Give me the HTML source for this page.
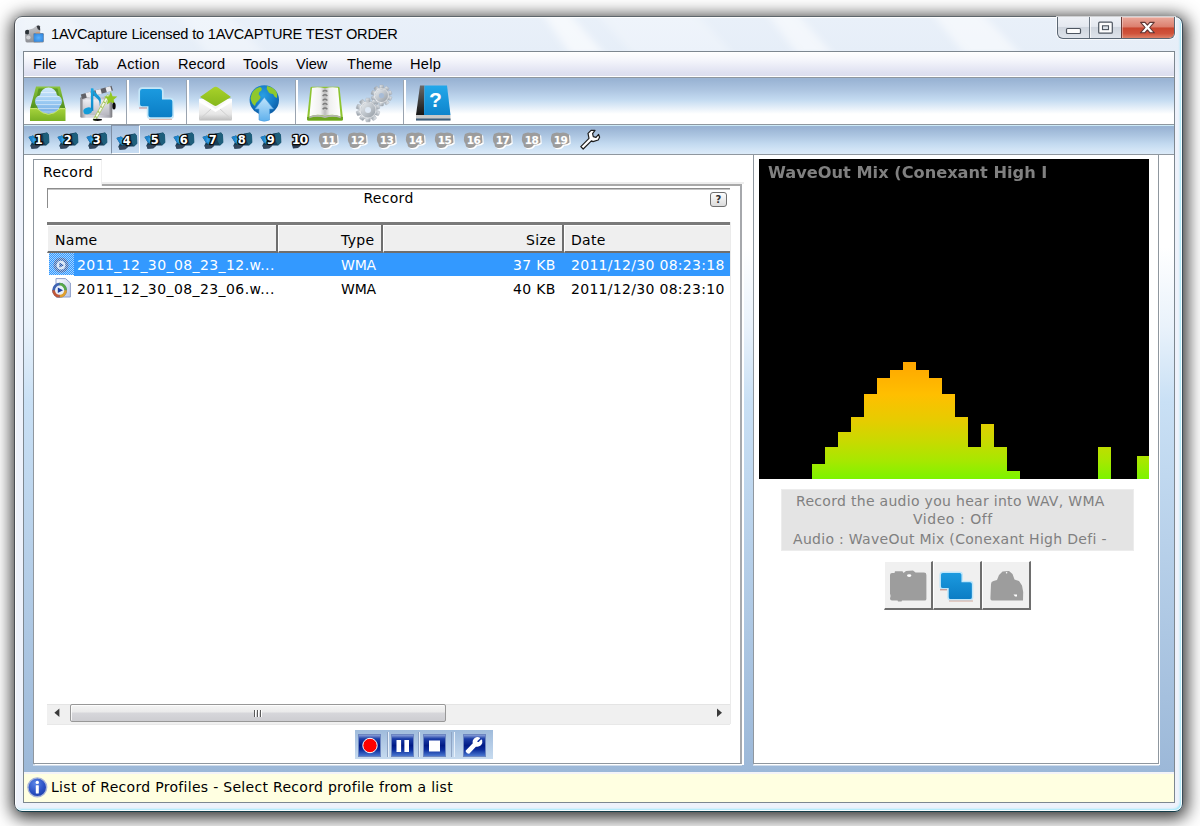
<!DOCTYPE html>
<html><head><meta charset="utf-8"><title>1AVCapture</title>
<style>
html,body{margin:0;padding:0;}
body{width:1200px;height:826px;background:#fff;position:relative;overflow:hidden;font-family:"DejaVu Sans","Liberation Sans",sans-serif;font-size:14px;letter-spacing:0.3px;color:#000;}
div,span{box-sizing:border-box;}
.a{position:absolute;}
svg{position:absolute;overflow:visible;}
#win{position:absolute;left:14px;top:16px;width:1169px;height:796px;border:1px solid #3f5868;border-color:#5e666c #3a4c5a #163e4a #4a4e54;border-radius:8px;
 background:linear-gradient(180deg,#e9f0f9 0px,#e6eef8 34px,#eef2fb 60px,#eef2fb 100%);
 box-shadow:1px 3px 17px 3px rgba(0,0,0,.82), inset 0 0 0 1px rgba(255,255,255,.9), inset -2px -2px 2px 0 rgba(120,228,250,.65);}
#title{position:absolute;left:51px;top:25px;letter-spacing:-0.19px;font-family:"Liberation Sans",sans-serif;font-size:14.6px;line-height:18px;white-space:nowrap;color:#000;}
#client{position:absolute;left:23px;top:51px;width:1152px;height:752px;border:1px solid #7d8790;background:#fff;}
#menubar{position:absolute;left:24px;top:52px;width:1150px;height:24px;background:linear-gradient(180deg,#ffffff 0%,#f4f5fb 35%,#dfe1f1 85%,#dcdeee 100%);}
.mi{position:absolute;top:55px;letter-spacing:0;font-family:"Liberation Sans",sans-serif;font-size:14.6px;line-height:18px;white-space:nowrap;}
#tb1{position:absolute;left:24px;top:76px;width:1150px;height:49px;border-top:1px solid #fff;border-bottom:1px solid #8f979f;
 background:linear-gradient(180deg,#9ab4d4 0px,#9ab4d4 3px,#adc5e1 13px,#c4dbf1 23px,#ffffff 37px,#ffffff 100%);}
#tb1:before{content:"";position:absolute;left:0;top:0;width:100%;height:1px;background:#8f979f;}
#tb2{position:absolute;left:24px;top:125px;width:1150px;height:30px;border-bottom:1px solid #8f979f;
 background:linear-gradient(180deg,#cdeaf6 0px,#cdeaf6 1px,#9ab4d4 1px,#9ab4d4 3px,#abc4e0 10px,#c3daf0 19px,#d3e5f6 25px,#dcebf8 29px);}
#main{position:absolute;left:24px;top:155px;width:1150px;height:617px;background:linear-gradient(180deg,#ffffff 0%,#ffffff 15%,#e9f2fb 28%,#c9e0f5 40%,#9cb8d8 100%);}
.sep{position:absolute;top:80px;width:1px;height:44px;background:#9aa4b0;box-shadow:1px 0 0 #fff,2px 0 0 #fff;}
/* left pane */
#pane{position:absolute;left:33px;top:184px;width:709px;height:580px;background:#fff;border:1px solid #8f979f;border-top:2px solid #a8a8a8;border-right:2px solid #a6a8ac;box-shadow:2px 1px 0 #fff,0 2px 0 rgba(255,255,255,.5);}
#tabhead{position:absolute;left:33px;top:159px;width:69px;height:27px;background:#fff;border:1px solid #8f979f;border-bottom:none;border-right:1px solid #f0f0f0;}
#tabfill{position:absolute;left:102px;top:155px;width:642px;height:29px;background:#fff;border-bottom:2px solid #eeeeee;}
#tabtxt{position:absolute;left:43px;top:164px;line-height:17px;white-space:nowrap;}
#tbox{position:absolute;left:47px;top:188px;width:683px;height:20px;border-top:1px solid #8c8c8c;border-left:1px solid #8c8c8c;box-shadow:inset 0 1px 0 #c4c4c4;}
#tboxtxt{position:absolute;left:47px;top:190px;width:683px;text-align:center;line-height:17px;}
#qbtn{position:absolute;left:710px;top:192px;width:17px;height:15px;border:1px solid #6f6f6f;border-radius:3px;background:linear-gradient(180deg,#fdfdfd,#dcdcdc);font-size:10px;font-weight:bold;line-height:13px;text-align:center;color:#333;}
#lright{position:absolute;left:730px;top:222px;width:1px;height:502px;background:#ebebeb;}
#lhtop{position:absolute;left:47px;top:222px;width:683px;height:3px;background:#7a7a7a;}
.hc{position:absolute;top:225px;height:28px;background:#efefef;box-shadow:inset 0 1px 0 #fff;border-right:2px solid #6e6e6e;border-bottom:2px solid #6e6e6e;border-left:1px solid #fff;}
.ht{position:absolute;top:232px;line-height:17px;white-space:nowrap;}
.row{position:absolute;left:74px;width:656px;height:23px;}
.sel{background:#3399ff;}
.ct{position:absolute;line-height:17px;white-space:nowrap;}
.w{color:#fff;}
#hsb{position:absolute;left:47px;top:704px;width:683px;height:21px;background:#f0f0f0;border-top:1px solid #e4e4e4;border-bottom:1px solid #e8e8e8;}
#thumb{position:absolute;left:70px;top:704px;width:376px;height:18px;border:1px solid #989898;border-radius:2px;background:linear-gradient(180deg,#f5f5f5 0%,#ebebeb 42%,#d6d6da 52%,#cdcdd1 100%);box-shadow:inset 1px 1px 0 rgba(255,255,255,.8);}
#stb{position:absolute;left:355px;top:730px;width:138px;height:29px;background:linear-gradient(180deg,#9fbbdb 0%,#b3cbe6 50%,#c7dbef 100%);}
.sb{position:absolute;top:734px;width:23px;height:23px;background:linear-gradient(180deg,#8aa0d8 0%,#1c3ea8 18%,#001a86 50%,#0a2c9c 70%,#4a78d0 100%);border:1px solid #6d86c0;}
/* right pane */
#rpane{position:absolute;left:753px;top:155px;width:406px;height:609px;background:#fff;border:1px solid #8f979f;border-top:none;box-shadow:1px 1px 0 #fff,0 2px 0 rgba(255,255,255,.5);}
#video{position:absolute;left:759px;top:159px;width:390px;height:320px;background:#000;overflow:hidden;}
#vtxt{position:absolute;left:768px;top:165px;font-weight:bold;color:#808080;line-height:17px;white-space:nowrap;font-size:15px;letter-spacing:0;transform-origin:0 0;transform:scaleX(1.08);}
#info{position:absolute;left:781px;top:489px;width:353px;height:62px;background:#e4e4e4;border:1px solid #ececec;}
.it{position:absolute;color:#808080;line-height:17px;white-space:nowrap;}
.bb{position:absolute;top:561px;width:49px;height:49px;background:#f0f0f0;border-top:1px solid #fff;border-left:1px solid #fff;border-right:2px solid #6e6e6e;border-bottom:2px solid #6e6e6e;}
#status{position:absolute;left:24px;top:772px;width:1150px;height:30px;background:#ffffe1;border-top:2px solid #f4f4f8;}
#sttxt{position:absolute;left:51px;top:779px;line-height:17px;white-space:nowrap;}

</style></head>
<body>
<div id="win"></div>
<svg style="left:15px;top:17px;overflow:hidden" width="1167" height="34" viewBox="15 17 1167 34">
 <defs><filter id="blr" x="-20%" y="-50%" width="140%" height="200%"><feGaussianBlur stdDeviation="5 1"/></filter></defs>
 <g fill="#ffffff" filter="url(#blr)">
  <path d="M15 17 H70 L100 51 H15Z" opacity=".3"/>
  <path d="M180 17 H230 L262 51 H205Z" opacity=".3"/>
  <path d="M545 17 H572 L602 51 H568Z" opacity=".6"/>
  <path d="M600 17 H700 L730 51 H630Z" opacity=".25"/>
  <path d="M770 17 H800 L830 51 H795Z" opacity=".5"/>
  <path d="M935 17 H985 L1018 51 H962Z" opacity=".5"/>
 </g>
</svg>
<div id="title">1AVCapture Licensed to 1AVCAPTURE TEST ORDER</div>
<div id="client"></div>
<div id="menubar"></div>
<div class="mi" style="left:33px">File</div>
<div class="mi" style="left:75px">Tab</div>
<div class="mi" style="left:117px;letter-spacing:.4px">Action</div>
<div class="mi" style="left:178px">Record</div>
<div class="mi" style="left:243px;letter-spacing:.25px">Tools</div>
<div class="mi" style="left:296px">View</div>
<div class="mi" style="left:347px">Theme</div>
<div class="mi" style="left:410px;letter-spacing:.3px">Help</div>
<div id="tb1"></div>
<div id="tb2"></div>
<div id="main"></div>
<!-- title icon -->
<svg style="left:24px;top:24px" width="22" height="20" viewBox="0 0 22 20">
 <defs><linearGradient id="ti1" x1="0" y1="0" x2="0" y2="1"><stop offset="0" stop-color="#c4c6ca"/><stop offset="0.5" stop-color="#a9abb0"/><stop offset="1" stop-color="#8d8f94"/></linearGradient>
 <radialGradient id="ti2" cx="0.5" cy="0.5" r="0.7"><stop offset="0" stop-color="#58b0ff"/><stop offset="1" stop-color="#2a7fd6"/></radialGradient>
 <filter id="tib" x="-10%" y="-10%" width="120%" height="120%"><feGaussianBlur stdDeviation=".45"/></filter></defs>
 <g filter="url(#tib)">
 <path d="M1 9 Q1 6.4 3.6 6 L9 4.6 L13 1.4 Q15.4 0.6 16 2.6 L16.2 8 L16.2 18.2 L3 18.6 Q1.4 18.6 1.4 16.6 Z" fill="url(#ti1)"/>
 <path d="M12.6 2 Q15 0.6 16 2.6 L16.2 6.4 L13.8 5.2 Z" fill="#34383e"/>
 <path d="M1.2 6.8 Q3.6 5 5 6.6 L4.8 10 Q2.6 11 1.2 9.6 Z" fill="#2c3238"/>
 <ellipse cx="4.4" cy="13.4" rx="2.2" ry="2" fill="#d0d2d6"/>
 <rect x="9.2" y="9" width="10.6" height="9.4" rx="1.2" fill="#8a8c92"/>
 <rect x="9.8" y="9.6" width="9.6" height="8.2" rx=".8" fill="url(#ti2)"/>
 <rect x="11.6" y="8" width="4.6" height="1.4" fill="#d89a6a" opacity=".7"/>
 </g>
</svg>
<!-- caption buttons -->
<div class="a" style="left:1057px;top:17px;width:118px;height:22px;border:1px solid #5a6673;border-top:none;border-radius:0 0 6px 6px;overflow:hidden;
 background:linear-gradient(180deg,#eef1f6 0%,#e4e8ef 45%,#cfd5de 50%,#dfe4eb 100%);box-shadow:0 0 0 1px rgba(255,255,255,.7);">
 <div class="a" style="left:31px;top:0;width:1px;height:22px;background:#6b7682;box-shadow:1px 0 0 rgba(255,255,255,.7)"></div>
 <div class="a" style="left:63px;top:0;width:54px;height:22px;border-left:1px solid #6a3a36;background:linear-gradient(180deg,#e9a99c 0%,#dc7f6e 45%,#c9462f 50%,#d0533b 75%,#e08a70 100%);box-shadow:inset 0 0 0 1px rgba(255,255,255,.35)"></div>
</div>
<svg style="left:1057px;top:17px" width="118" height="22" viewBox="0 0 118 22">
 <rect x="9.5" y="11.5" width="14" height="5" rx="1" fill="#fdfdfd" stroke="#4d5560" stroke-width="1.2"/>
 <rect x="41.7" y="5.2" width="13.6" height="11" rx="1" fill="#fdfdfd" stroke="#4d5560" stroke-width="1.2"/>
 <rect x="45.5" y="8.8" width="6" height="3.8" fill="#dfe4ea" stroke="#4d5560" stroke-width="1.1"/>
 <path d="M83.6 5.4 L88 5.4 L90.4 8.2 L92.8 5.4 L97.2 5.4 L92.7 10.5 L97.4 15.8 L93 15.8 L90.4 12.8 L87.8 15.8 L83.4 15.8 L88.1 10.5 Z" fill="#ffffff" stroke="#5e3634" stroke-width="1.1" stroke-linejoin="round"/>
</svg>
<div class="sep" style="left:126px"></div>
<div class="sep" style="left:186px"></div>
<div class="sep" style="left:295px"></div>
<div class="sep" style="left:403px"></div>
<!-- icon 1 : tray -->
<svg style="left:30px;top:86px" width="36" height="36" viewBox="0 0 36 36">
 <defs>
  <linearGradient id="g1a" x1="0" y1="0" x2="0" y2="1"><stop offset="0" stop-color="#8cc63c"/><stop offset="1" stop-color="#4f8f1c"/></linearGradient>
  <linearGradient id="g1b" x1="0" y1="0" x2="0" y2="1"><stop offset="0" stop-color="#b4d94a"/><stop offset="0.15" stop-color="#9fcd38"/><stop offset="1" stop-color="#79b124"/></linearGradient>
  <linearGradient id="g1c" x1="0" y1="0" x2="0" y2="1"><stop offset="0" stop-color="#d6ebfb"/><stop offset="0.5" stop-color="#9ccbf3"/><stop offset="1" stop-color="#6ea6e0"/></linearGradient>
 </defs>
 <path d="M6 0.5 L30 0.5 L35.5 23 L0 23 Z" fill="url(#g1a)"/>
 <path d="M8.5 2.5 L27.5 2.5 L32 23 L4 23 Z" fill="#5d9a25"/>
 <clipPath id="c1c"><circle cx="18.5" cy="10" r="8.6"/><circle cx="11.6" cy="15.6" r="6.6"/><circle cx="25.4" cy="15.6" r="6.6"/><ellipse cx="18.5" cy="19.4" rx="11.4" ry="9.2"/></clipPath>
 <rect x="4" y="1" width="29" height="29" fill="url(#g1c)" clip-path="url(#c1c)"/>
 <g stroke="#ffffff" stroke-opacity=".45" stroke-width="1.2" clip-path="url(#c1c)">
  <path d="M9 6.5H28"/><path d="M7 10.5H30"/><path d="M6 14.5H31"/><path d="M6 18.5H31"/><path d="M8 22.5H29"/><path d="M11 26H26"/>
 </g>
 <path d="M0 22.5 L7 22.5 Q18.5 34 30 22.5 L35.5 22.5 L35.5 35 L0 35 Z" fill="url(#g1b)"/>
 <path d="M0 22.5 L7 22.5 Q18.5 34 30 22.5 L35.5 22.5" fill="none" stroke="#c8e66e" stroke-width="1"/>
</svg>
<!-- icon 2 : clapper + note + wand -->
<svg style="left:80px;top:85px" width="38" height="37" viewBox="0 0 38 37">
 <defs>
  <linearGradient id="g2a" x1="0" y1="0" x2="1" y2="0"><stop offset="0" stop-color="#7e7e84"/><stop offset="0.18" stop-color="#d9d9e0"/><stop offset="0.6" stop-color="#cfcfd8"/><stop offset="0.9" stop-color="#a8a8b0"/><stop offset="1" stop-color="#77777c"/></linearGradient>
  <linearGradient id="g2b" x1="0" y1="0" x2="0" y2="1"><stop offset="0" stop-color="#1aa8e2"/><stop offset="1" stop-color="#0c86c8"/></linearGradient>
  <linearGradient id="g2c" x1="0" y1="0" x2="0" y2="1"><stop offset="0" stop-color="#f2f2f6"/><stop offset="1" stop-color="#b8b8c0"/></linearGradient>
 </defs>
 <rect x="0.3" y="11.8" width="32" height="21" rx="1.5" fill="url(#g2a)"/>
 <rect x="2.8" y="14.5" width="26.5" height="15.5" fill="url(#g2c)" opacity=".85"/>
 <path d="M0.8 9.4 L31.5 0.8 L33 5.6 L2.2 14 Z" fill="#606066"/>
 <path d="M5.5 8.1 L10.5 6.7 L11.8 11.4 L6.8 12.8Z M15.5 5.3 L20.5 3.9 L21.8 8.7 L16.8 10.1Z M25.5 2.5 L30.3 1.2 L31.7 6 L26.8 7.3Z" fill="#ececf0"/>
 <rect x="10.9" y="3.3" width="2.4" height="22.6" fill="url(#g2b)"/>
 <ellipse cx="7.7" cy="25.8" rx="4.4" ry="3.3" transform="rotate(-18 7.7 25.8)" fill="#149cd8"/>
 <path d="M13.3 3.3 Q14.2 7.4 18.4 10.4 Q22.8 14 19.4 21.4 Q20.4 15.6 16.8 13.2 Q13.6 11 13.3 9 Z" fill="url(#g2b)"/>
 <path d="M13.2 34.6 L27.4 9.6 L29.6 10.8 L15.4 35.8 Z" fill="#f6f8ea" stroke="#9cc048" stroke-width=".7"/>
 <path d="M15 31.4 L16.8 32.4 M17.8 26.5 L19.6 27.5 M20.6 21.6 L22.4 22.6 M23.4 16.7 L25.2 17.7" stroke="#9cc048" stroke-width="1.2"/>
 <path d="M30.8 6.6 L32.5 11.2 L37.3 11.6 L33.6 14.8 L34.8 19.6 L30.8 17 L26.8 19.6 L28 14.8 L24.3 11.6 L29.1 11.2 Z" fill="#93c724"/>
 <ellipse cx="34" cy="21" rx="1.7" ry="3.6" fill="#0a0a0a"/>
 <ellipse cx="17.5" cy="34.8" rx="4.6" ry="1.1" fill="#0a0a0a"/>
</svg>
<!-- icon 3 : blue squares -->
<svg style="left:138px;top:86px" width="38" height="36" viewBox="0 0 38 36">
 <defs>
  <linearGradient id="g3a" x1="0" y1="0" x2="0" y2="1"><stop offset="0" stop-color="#1c9be0"/><stop offset="1" stop-color="#0a7cc4"/></linearGradient>
 </defs>
 <path d="M4.2 2.2 H21.8 Q24.8 2.2 24.8 5.2 V12.6 H32.2 Q35.2 12.6 35.2 15.6 V29.2 Q35.2 32.2 32.2 32.2 H12.6 Q9.6 32.2 9.6 29.2 V21.2 H4.2 Q1.2 21.2 1.2 18.2 V5.2 Q1.2 2.2 4.2 2.2Z" fill="url(#g3a)" stroke="#c4e6f8" stroke-width="1.7"/>
 <path d="M1 22 L9 22" stroke="#b04848" stroke-width="1" opacity=".6"/>
 <path d="M11 33.4 L34 33.4" stroke="#c08070" stroke-width="1" opacity=".6"/>
</svg>
<!-- icon 4 : envelope -->
<svg style="left:198px;top:86px" width="36" height="36" viewBox="0 0 36 36">
 <defs>
  <linearGradient id="g4a" x1="0" y1="0" x2="0" y2="1"><stop offset="0" stop-color="#a9d22a"/><stop offset="1" stop-color="#86b81c"/></linearGradient>
  <linearGradient id="g4b" x1="0" y1="0" x2="0" y2="1"><stop offset="0" stop-color="#ffffff"/><stop offset="0.7" stop-color="#e6e6e6"/><stop offset="1" stop-color="#bdbdbd"/></linearGradient>
 </defs>
 <path d="M1 13 L1 33.5 Q1 34.5 2 34.5 L33 34.5 Q34 34.5 34 33.5 L34 13 Z" fill="url(#g4b)"/>
 <path d="M17.5 0.8 Q18.5 0.5 20 1.5 L33 11 L19 19.5 Q17.5 20.3 16 19.5 L2 11 L15.5 1.5 Q16.5 0.7 17.5 0.8Z" fill="url(#g4a)"/>
 <path d="M1 12.5 L17.5 23 L34 12.5 L34 16 L17.5 26 L1 16 Z" fill="#ffffff"/>
 <path d="M1 34 L13 23 M34 34 L22 23" stroke="#d0d0d0" stroke-width="1" fill="none"/>
</svg>
<!-- icon 5 : globe + arrow -->
<svg style="left:249px;top:85px" width="32" height="37" viewBox="0 0 32 37">
 <defs>
  <radialGradient id="g5a" cx="0.45" cy="0.35" r="0.7"><stop offset="0" stop-color="#2aa0e4"/><stop offset="0.6" stop-color="#1478c4"/><stop offset="1" stop-color="#0b58a0"/></radialGradient>
  <linearGradient id="g5b" x1="0" y1="0" x2="0" y2="1"><stop offset="0" stop-color="#bfe4fb"/><stop offset="1" stop-color="#5fb0ec"/></linearGradient>
 </defs>
 <circle cx="15.3" cy="15" r="14.7" fill="url(#g5a)"/>
 <path d="M3 8 Q6 3 11 2 Q14 3 12 6 Q9 7 10 10 Q13 12 10 15 Q7 17 6 21 Q2 18 1.5 13 Z" fill="#8fc82c"/>
 <path d="M18 1 Q24 2 27 6 Q29 9 28 13 Q25 12 24 9 Q20 9 19 6 Q17 4 18 1Z" fill="#8fc82c"/>
 <path d="M15.3 12.5 L24.5 24 L20.5 24 L20.5 35 Q15.3 37.5 10 35 L10 24 L6 24 Z" fill="url(#g5b)" stroke="#4a9ee0" stroke-width=".6"/>
</svg>
<!-- icon 6 : book -->
<svg style="left:306px;top:86px" width="38" height="36" viewBox="0 0 38 36">
 <defs>
  <linearGradient id="g6a" x1="0" y1="0" x2="1" y2="0"><stop offset="0" stop-color="#ffffff"/><stop offset="0.7" stop-color="#f0f0f0"/><stop offset="1" stop-color="#bcbcbc"/></linearGradient>
  <linearGradient id="g6b" x1="1" y1="0" x2="0" y2="0"><stop offset="0" stop-color="#ffffff"/><stop offset="0.7" stop-color="#f0f0f0"/><stop offset="1" stop-color="#bcbcbc"/></linearGradient>
 </defs>
 <path d="M4.5 1.5 Q5 0.8 6 0.8 L32 0.8 Q33 0.8 33.5 1.5 L37 33 Q37 34.6 35.5 34.6 L2.5 34.6 Q1 34.6 1 33 Z" fill="#8ec430"/>
 <path d="M1 31 L37 31 L37 33 Q37 34.6 35.5 34.6 L2.5 34.6 Q1 34.6 1 33Z" fill="#6da520"/>
 <path d="M6 1.8 Q12 0.4 19 2.2 L19 30 Q11 27.4 3.4 30.4 Z" fill="url(#g6a)"/>
 <path d="M32 1.8 Q26 0.4 19 2.2 L19 30 Q27 27.4 34.6 30.4 Z" fill="url(#g6b)"/>
 <path d="M3.4 30.4 Q11 27.6 19 30.2 L19 32 Q11 29.6 3.2 32.2Z M34.6 30.4 Q27 27.6 19 30.2 L19 32 Q27 29.6 34.8 32.2Z" fill="#b4b4b4"/>
 <g fill="none" stroke="#7c7c7c" stroke-width="1.4">
  <path d="M16.6 5.6 Q19 3.2 21.4 5.6"/><path d="M16.6 10 Q19 7.6 21.4 10"/><path d="M16.6 14.4 Q19 12 21.4 14.4"/><path d="M16.6 18.8 Q19 16.4 21.4 18.8"/><path d="M16.6 23.2 Q19 20.8 21.4 23.2"/>
 </g>
</svg>
<!-- icon 7 : gears -->
<svg style="left:355px;top:85px" width="38" height="37" viewBox="0 0 38 37">
 <defs>
  <linearGradient id="g7a" x1="0" y1="0" x2="1" y2="1"><stop offset="0" stop-color="#f4f6f8"/><stop offset="0.45" stop-color="#c4cad0"/><stop offset="1" stop-color="#8c949c"/></linearGradient>
 </defs>
 <g transform="translate(26.5,10.5)">
  <g fill="url(#g7a)" stroke="#a4acb4" stroke-width=".5">
   <circle r="7.6" stroke="none"/>
   <g id="teeth7"><rect x="-2" y="-10.4" width="4" height="4" rx=".8"/><rect x="-2" y="6.4" width="4" height="4" rx=".8"/></g>
   <use href="#teeth7" transform="rotate(36)"/><use href="#teeth7" transform="rotate(72)"/><use href="#teeth7" transform="rotate(108)"/><use href="#teeth7" transform="rotate(144)"/>
  </g>
  <circle r="7" fill="none" stroke="#ffffff" stroke-opacity=".5" stroke-width="1.2"/><circle r="2.6" fill="#a8bcd6"/>
 </g>
 <g transform="translate(13,25)">
  <g fill="url(#g7a)" stroke="#a4acb4" stroke-width=".5">
   <circle r="8.8" stroke="none"/>
   <g id="teeth7b"><rect x="-2.2" y="-11.8" width="4.4" height="4.4" rx=".8"/><rect x="-2.2" y="7.4" width="4.4" height="4.4" rx=".8"/></g>
   <use href="#teeth7b" transform="rotate(36)"/><use href="#teeth7b" transform="rotate(72)"/><use href="#teeth7b" transform="rotate(108)"/><use href="#teeth7b" transform="rotate(144)"/>
  </g>
  <circle r="8" fill="none" stroke="#ffffff" stroke-opacity=".5" stroke-width="1.2"/><circle r="3" fill="#dfe9f5"/>
 </g>
</svg>
<!-- icon 8 : help book -->
<svg style="left:415px;top:85px" width="37" height="37" viewBox="0 0 37 37">
 <defs>
  <linearGradient id="g8a" x1="0" y1="0" x2="0" y2="1"><stop offset="0" stop-color="#22a8ea"/><stop offset="1" stop-color="#0f84cc"/></linearGradient>
  <linearGradient id="g8b" x1="0" y1="0" x2="0" y2="1"><stop offset="0" stop-color="#6a6a6a"/><stop offset="1" stop-color="#161616"/></linearGradient>
 </defs>
 <path d="M1 30 L35.5 30 L35.5 35.5 L1 35.5Z" fill="#c9c9c9"/>
 <path d="M1 33.5 L35.5 33.5 L35.5 35.5 L1 35.5Z" fill="#3d5d7a"/>
 <path d="M5 0.5 L9.5 0.5 L9 30 L1 30 Z" fill="url(#g8b)"/>
 <path d="M9.5 0.5 L32 0.5 L35.5 30 L9 30 Z" fill="url(#g8a)"/>
 <text x="20.5" y="22" font-family="Liberation Sans, sans-serif" font-weight="bold" font-size="21" text-anchor="middle" fill="#ffffff">?</text>
</svg>
<div class="a" style="left:111px;top:125px;width:29px;height:29px;background:linear-gradient(180deg,#a8c1de 0%,#b9d0ea 60%,#c9def3 100%);border-left:1px solid #7f8fa4;border-top:1px solid #8a9ab0;border-right:1px solid #fff;border-bottom:1px solid #fff;"></div>
<svg width="0" height="0" style="left:0;top:0"><defs><g id="nb"><path d="M0.5 5 L5 3.6 L7.5 5.6 L13 1.6 L19 0.4 L21 3 L21.2 10.6 L18 13.4 L12.4 13.6 L9.4 16.2 L3.6 16.8 L2.4 13.4 L3.8 10.4 Z" fill="#173f58"/><path d="M0.5 5 L5 3.6 L7.5 5.6 L8.5 8 L7 12.5 L3.8 10.4 Z" fill="#1f84cc"/><path d="M4.5 5.6 L7 7 L6.6 10.6 L4.6 9.4Z" fill="#3aa0e4"/><path d="M15 2 L19 0.4 L21 3 L21.2 10.6 L18 13.4 L15.6 9 Z" fill="#1e5f7c"/><path d="M2.4 13.4 L9 12.4 L12.4 13.6 L9.4 16.2 L3.6 16.8 Z" fill="#34465c"/></g><g id="nbd"><path d="M2 2 Q6 -0.5 10 1 Q15 -0.5 19 2.5 L19.5 10.5 Q17 13 13 12.5 Q11 16.5 6 16 Q2.5 15.5 2.5 12 Q-0.5 8 2 2Z" fill="#ffffff" transform="translate(1.2,1.2)"/><path d="M2 2 Q6 -0.5 10 1 Q15 -0.5 19 2.5 L19.5 10.5 Q17 13 13 12.5 Q11 16.5 6 16 Q2.5 15.5 2.5 12 Q-0.5 8 2 2Z" fill="#9c9c9c"/></g></defs></svg>
<svg style="left:28px;top:132px" width="22" height="18" viewBox="0 0 22 18"><use href="#nb"/><text x="11" y="11.6" text-anchor="middle" font-family="DejaVu Sans, Liberation Sans, sans-serif" font-weight="bold" font-size="11.5" fill="#ffffff" stroke="#0a0a0a" stroke-width="2.6" stroke-linejoin="round" paint-order="stroke">1</text></svg>
<svg style="left:57px;top:132px" width="22" height="18" viewBox="0 0 22 18"><use href="#nb"/><text x="11" y="11.6" text-anchor="middle" font-family="DejaVu Sans, Liberation Sans, sans-serif" font-weight="bold" font-size="11.5" fill="#ffffff" stroke="#0a0a0a" stroke-width="2.6" stroke-linejoin="round" paint-order="stroke">2</text></svg>
<svg style="left:86px;top:132px" width="22" height="18" viewBox="0 0 22 18"><use href="#nb"/><text x="11" y="11.6" text-anchor="middle" font-family="DejaVu Sans, Liberation Sans, sans-serif" font-weight="bold" font-size="11.5" fill="#ffffff" stroke="#0a0a0a" stroke-width="2.6" stroke-linejoin="round" paint-order="stroke">3</text></svg>
<svg style="left:116px;top:133px" width="22" height="18" viewBox="0 0 22 18"><use href="#nb"/><text x="11" y="11.6" text-anchor="middle" font-family="DejaVu Sans, Liberation Sans, sans-serif" font-weight="bold" font-size="11.5" fill="#ffffff" stroke="#0a0a0a" stroke-width="2.6" stroke-linejoin="round" paint-order="stroke">4</text></svg>
<svg style="left:144px;top:132px" width="22" height="18" viewBox="0 0 22 18"><use href="#nb"/><text x="11" y="11.6" text-anchor="middle" font-family="DejaVu Sans, Liberation Sans, sans-serif" font-weight="bold" font-size="11.5" fill="#ffffff" stroke="#0a0a0a" stroke-width="2.6" stroke-linejoin="round" paint-order="stroke">5</text></svg>
<svg style="left:173px;top:132px" width="22" height="18" viewBox="0 0 22 18"><use href="#nb"/><text x="11" y="11.6" text-anchor="middle" font-family="DejaVu Sans, Liberation Sans, sans-serif" font-weight="bold" font-size="11.5" fill="#ffffff" stroke="#0a0a0a" stroke-width="2.6" stroke-linejoin="round" paint-order="stroke">6</text></svg>
<svg style="left:202px;top:132px" width="22" height="18" viewBox="0 0 22 18"><use href="#nb"/><text x="11" y="11.6" text-anchor="middle" font-family="DejaVu Sans, Liberation Sans, sans-serif" font-weight="bold" font-size="11.5" fill="#ffffff" stroke="#0a0a0a" stroke-width="2.6" stroke-linejoin="round" paint-order="stroke">7</text></svg>
<svg style="left:231px;top:132px" width="22" height="18" viewBox="0 0 22 18"><use href="#nb"/><text x="11" y="11.6" text-anchor="middle" font-family="DejaVu Sans, Liberation Sans, sans-serif" font-weight="bold" font-size="11.5" fill="#ffffff" stroke="#0a0a0a" stroke-width="2.6" stroke-linejoin="round" paint-order="stroke">8</text></svg>
<svg style="left:260px;top:132px" width="22" height="18" viewBox="0 0 22 18"><use href="#nb"/><text x="11" y="11.6" text-anchor="middle" font-family="DejaVu Sans, Liberation Sans, sans-serif" font-weight="bold" font-size="11.5" fill="#ffffff" stroke="#0a0a0a" stroke-width="2.6" stroke-linejoin="round" paint-order="stroke">9</text></svg>
<svg style="left:289px;top:132px" width="22" height="18" viewBox="0 0 22 18"><path d="M3 13 L9 12 L12 13.5 L9 16 L4 16.5 Z" fill="#2a3a50"/><text x="10.6" y="11.6" text-anchor="middle" font-family="DejaVu Sans, Liberation Sans, sans-serif" font-weight="bold" font-size="12.5" letter-spacing="-0.8" fill="#ffffff" stroke="#0a0a0a" stroke-width="2.6" stroke-linejoin="round" paint-order="stroke">10</text></svg>
<svg style="left:318px;top:132px" width="22" height="18" viewBox="0 0 22 18"><use href="#nbd"/><text x="10.5" y="11.5" text-anchor="middle" font-family="DejaVu Sans, Liberation Sans, sans-serif" font-weight="bold" font-size="10.5" letter-spacing="-0.6" fill="#ffffff" stroke="#b4b4b4" stroke-width="0.6" paint-order="stroke">11</text></svg>
<svg style="left:347px;top:132px" width="22" height="18" viewBox="0 0 22 18"><use href="#nbd"/><text x="10.5" y="11.5" text-anchor="middle" font-family="DejaVu Sans, Liberation Sans, sans-serif" font-weight="bold" font-size="10.5" letter-spacing="-0.6" fill="#ffffff" stroke="#b4b4b4" stroke-width="0.6" paint-order="stroke">12</text></svg>
<svg style="left:376px;top:132px" width="22" height="18" viewBox="0 0 22 18"><use href="#nbd"/><text x="10.5" y="11.5" text-anchor="middle" font-family="DejaVu Sans, Liberation Sans, sans-serif" font-weight="bold" font-size="10.5" letter-spacing="-0.6" fill="#ffffff" stroke="#b4b4b4" stroke-width="0.6" paint-order="stroke">13</text></svg>
<svg style="left:405px;top:132px" width="22" height="18" viewBox="0 0 22 18"><use href="#nbd"/><text x="10.5" y="11.5" text-anchor="middle" font-family="DejaVu Sans, Liberation Sans, sans-serif" font-weight="bold" font-size="10.5" letter-spacing="-0.6" fill="#ffffff" stroke="#b4b4b4" stroke-width="0.6" paint-order="stroke">14</text></svg>
<svg style="left:434px;top:132px" width="22" height="18" viewBox="0 0 22 18"><use href="#nbd"/><text x="10.5" y="11.5" text-anchor="middle" font-family="DejaVu Sans, Liberation Sans, sans-serif" font-weight="bold" font-size="10.5" letter-spacing="-0.6" fill="#ffffff" stroke="#b4b4b4" stroke-width="0.6" paint-order="stroke">15</text></svg>
<svg style="left:463px;top:132px" width="22" height="18" viewBox="0 0 22 18"><use href="#nbd"/><text x="10.5" y="11.5" text-anchor="middle" font-family="DejaVu Sans, Liberation Sans, sans-serif" font-weight="bold" font-size="10.5" letter-spacing="-0.6" fill="#ffffff" stroke="#b4b4b4" stroke-width="0.6" paint-order="stroke">16</text></svg>
<svg style="left:492px;top:132px" width="22" height="18" viewBox="0 0 22 18"><use href="#nbd"/><text x="10.5" y="11.5" text-anchor="middle" font-family="DejaVu Sans, Liberation Sans, sans-serif" font-weight="bold" font-size="10.5" letter-spacing="-0.6" fill="#ffffff" stroke="#b4b4b4" stroke-width="0.6" paint-order="stroke">17</text></svg>
<svg style="left:521px;top:132px" width="22" height="18" viewBox="0 0 22 18"><use href="#nbd"/><text x="10.5" y="11.5" text-anchor="middle" font-family="DejaVu Sans, Liberation Sans, sans-serif" font-weight="bold" font-size="10.5" letter-spacing="-0.6" fill="#ffffff" stroke="#b4b4b4" stroke-width="0.6" paint-order="stroke">18</text></svg>
<svg style="left:550px;top:132px" width="22" height="18" viewBox="0 0 22 18"><use href="#nbd"/><text x="10.5" y="11.5" text-anchor="middle" font-family="DejaVu Sans, Liberation Sans, sans-serif" font-weight="bold" font-size="10.5" letter-spacing="-0.6" fill="#ffffff" stroke="#b4b4b4" stroke-width="0.6" paint-order="stroke">19</text></svg>
<svg style="left:579px;top:129px" width="22" height="22" viewBox="0 0 22 22"><path d="M1.8 17.6 L10 9.4 L9 4.4 L12 1.4 L16 1.4 L13.6 4.6 L14.3 7.6 L17 8.4 L19.6 5.4 L20.6 8.3 L19.2 11 L14 12.6 L12.4 11.8 L4.2 20 Z" fill="#ffffff" stroke="#1c1c1c" stroke-width="1.2" stroke-linejoin="round"/></svg>
<div id="tabfill"></div>
<div id="pane"></div>
<div id="tabhead"></div>
<div id="tabtxt">Record</div>
<div id="tbox"></div>
<div id="tboxtxt">Record</div>
<div id="qbtn">?</div>
<div id="lright"></div>
<div id="lhtop"></div>
<div class="hc" style="left:47px;width:231px"></div>
<div class="hc" style="left:278px;width:105px"></div>
<div class="hc" style="left:383px;width:181px"></div>
<div class="hc" style="left:564px;width:166px;border-right:none"></div>
<div class="ht" style="left:55px">Name</div>
<div class="ht" style="left:341px">Type</div>
<div class="ht" style="left:526px">Size</div>
<div class="ht" style="left:571px">Date</div>
<div class="row sel" style="top:253px"></div>
<div class="ct w" style="left:77px;top:257px;letter-spacing:.42px">2011_12_30_08_23_12.w...</div>
<div class="ct w" style="left:341px;top:257px;letter-spacing:-.2px">WMA</div>
<div class="ct w" style="left:513px;top:257px">37 KB</div>
<div class="ct w" style="left:571px;top:257px">2011/12/30 08:23:18</div>
<div class="ct" style="left:77px;top:281px;letter-spacing:.42px">2011_12_30_08_23_06.w...</div>
<div class="ct" style="left:341px;top:281px;letter-spacing:-.2px">WMA</div>
<div class="ct" style="left:513px;top:281px">40 KB</div>
<div class="ct" style="left:571px;top:281px">2011/12/30 08:23:10</div>
<div id="hsb"></div>
<div id="thumb"></div>
<div id="stb"></div>
<div class="sb" style="left:358px"></div>
<div class="sb" style="left:391px"></div>
<div class="sb" style="left:423px"></div>
<div class="sb" style="left:463px"></div>
<div id="rpane"></div>
<div id="video"></div>
<svg style="left:759px;top:159px;overflow:hidden" width="390" height="320" viewBox="759 159 390 320"><defs><linearGradient id="spg" gradientUnits="userSpaceOnUse" x1="0" y1="362" x2="0" y2="479"><stop offset="0" stop-color="#ffa600"/><stop offset="0.28" stop-color="#ffbf00"/><stop offset="0.5" stop-color="#e6cc00"/><stop offset="0.68" stop-color="#c8da00"/><stop offset="0.85" stop-color="#a6e800"/><stop offset="1" stop-color="#7cf400"/></linearGradient></defs><path fill="url(#spg)" d="M812 464h13V479h-13ZM825 447h13V479h-13ZM838 432h13V479h-13ZM851 417h13V479h-13ZM864 394h13V479h-13ZM877 378h13V479h-13ZM890 370h13V479h-13ZM903 362h13V479h-13ZM916 370h13V479h-13ZM929 378h13V479h-13ZM942 394h13V479h-13ZM955 417h13V479h-13ZM968 447h13V479h-13ZM981 424h13V479h-13ZM994 447h13V479h-13ZM1007 471h13V479h-13ZM1098 447h13V479h-13ZM1137 456h13V479h-13Z"/></svg>
<div id="vtxt">WaveOut Mix (Conexant High I</div>
<div id="info"></div>
<div class="it" style="left:796px;top:493px">Record the audio you hear into WAV, WMA</div>
<div class="it" style="left:913px;top:511px;letter-spacing:0.55px">Video : Off</div>
<div class="it" style="left:793px;top:531px">Audio : WaveOut Mix (Conexant High Defi -</div>
<div class="bb" style="left:884px"></div>
<div class="bb" style="left:933px"></div>
<div class="bb" style="left:982px"></div>
<svg style="left:889px;top:570px" width="38" height="32" viewBox="0 0 38 32"><path d="M1 5 Q1 3 3 3 L5.5 3 L6 1.2 L13.5 1.2 L14.5 3 L17 1 L24 0.6 L26.5 2.6 L35 2.6 Q37.4 2.6 37.4 5 L37.4 29 Q37.4 30.6 35.5 30.6 L13 30.6 L12.5 31.6 L9 31.6 L8.6 30.6 L3 30.6 Q1 30.6 1 28.6 L1.6 26 L1 23.5 Z" fill="#9d9d9d"/><ellipse cx="20.2" cy="5.6" rx="2.2" ry="1.4" fill="#ffffff"/></svg>
<svg style="left:939px;top:571px" width="36" height="31" viewBox="0 0 36 31"><defs><linearGradient id="bq" x1="0" y1="0" x2="0" y2="1"><stop offset="0" stop-color="#1c9be0"/><stop offset="1" stop-color="#0a7cc4"/></linearGradient></defs><path d="M3.8 1.2 H20.6 Q23.2 1.2 23.2 3.8 V10.4 H31 Q33.6 10.4 33.6 13 V26.2 Q33.6 28.8 31 28.8 H11.6 Q9 28.8 9 26.2 V17.8 H3.8 Q1.2 17.8 1.2 15.2 V3.8 Q1.2 1.2 3.8 1.2Z" fill="url(#bq)" stroke="#bfe6fa" stroke-width="1.5"/><path d="M1 18.8 L8 18.8" stroke="#b05040" stroke-width="1" opacity=".7"/><path d="M10 30 L34 30" stroke="#c07860" stroke-width="1" opacity=".6"/></svg>
<svg style="left:989px;top:570px" width="36" height="32" viewBox="0 0 36 32"><path d="M2 14 Q2 11.5 4.5 11 L8 10 L10 5 L13.5 1.6 L20 1 L23.5 4 L25.5 9.5 L30 11 L33 15.5 L34.2 22 L34 30.6 L3 30.6 Q1.4 30.6 1.4 28.6 Z" fill="#9d9d9d"/><circle cx="17.6" cy="2.8" r="0.8" fill="#ffffff"/><path d="M24.5 24.5 L28 24.5 L28 26.5 L26 26.5 Z" fill="#ffffff"/></svg>
<div id="status"></div>
<div id="sttxt">List of Record Profiles - Select Record profile from a list</div>
<!-- file icons -->
<div class="a" style="left:49px;top:253px;width:25px;height:22px;background:#3399ff;"></div>
<svg style="left:49px;top:253px" width="25" height="23" viewBox="0 0 25 23">
 <defs><pattern id="dith" width="2" height="2" patternUnits="userSpaceOnUse"><rect width="1" height="1" fill="#ffffff" opacity=".55"/><rect x="1" y="1" width="1" height="1" fill="#ffffff" opacity=".55"/></pattern></defs>
 <circle cx="12" cy="12.2" r="7.6" fill="#3f6fb8"/><circle cx="12" cy="12.2" r="4.4" fill="#cfe0f4"/><path d="M10.4 9.6 L15 12.2 L10.4 14.8Z" fill="#2454a8"/>
 <rect x="0" y="0" width="25" height="22" fill="url(#dith)"/>
</svg>
<svg style="left:51px;top:278px" width="22" height="21" viewBox="0 0 22 21">
 <defs><linearGradient id="fi1" x1="0" y1="0" x2="1" y2="1"><stop offset="0" stop-color="#ffffff"/><stop offset="1" stop-color="#b9c6e6"/></linearGradient></defs>
 <path d="M5 0.6 L14.5 0.6 L19.4 5 L19.4 19 L5 19 Z" fill="url(#fi1)" stroke="#8f9fca" stroke-width="1"/>
 <circle cx="8.6" cy="12.2" r="7.4" fill="#3f63b2"/>
 <path d="M8.6 4.8 A7.4 7.4 0 0 1 16 12.2 L8.6 12.2Z" fill="#58a848"/>
 <path d="M16 12.2 A7.4 7.4 0 0 1 8.6 19.6 L8.6 12.2Z" fill="#e0a030"/>
 <path d="M8.6 19.6 A7.4 7.4 0 0 1 1.2 12.2 L8.6 12.2Z" fill="#c05838"/>
 <circle cx="8.6" cy="12.2" r="4.6" fill="#e9f0fb"/>
 <path d="M6.8 9.4 L12 12.2 L6.8 15Z" fill="#1c3fa0"/>
</svg>
<!-- scrollbar arrows + grip -->
<svg style="left:47px;top:703px" width="683" height="21" viewBox="0 0 683 21">
 <path d="M12.4 5.6 L12.4 14 L7.4 9.8Z" fill="#3a3a3a"/>
 <path d="M670 5.6 L670 14 L675 9.8Z" fill="#3a3a3a"/>
 <path d="M207.5 7 V14 M210.5 7 V14 M213.5 7 V14" stroke="#5a5a5a" stroke-width="1"/>
 <path d="M208.5 7 V14 M211.5 7 V14 M214.5 7 V14" stroke="#ffffff" stroke-width="1"/>
</svg>
<!-- small buttons glyphs -->
<svg style="left:355px;top:730px" width="138" height="29" viewBox="0 0 138 29">
 <circle cx="15" cy="15.5" r="7.2" fill="#ff0000" stroke="#ffffff" stroke-width="1"/>
 <rect x="41.5" y="10" width="4.6" height="12" fill="#ffffff"/><rect x="49.4" y="10" width="4.6" height="12" fill="#ffffff"/>
 <rect x="74" y="10.5" width="11" height="11" fill="#ffffff"/>
 <path d="M32.5 2 V27 M63.5 2 V27 M96.5 2 V27" stroke="#8fa4c4" stroke-width="1"/>
 <path d="M33.5 2 V27 M64.5 2 V27 M99.5 2 V27" stroke="#e8f0fa" stroke-width="1"/>
 <path d="M112.5 22.6 L111.4 21 L118.6 13.6 Q117.8 10.4 120.2 8.6 Q122.2 7.4 124.2 8.2 L121.4 10.8 L122 12.6 L123.8 13.1 L126.4 10.4 Q127.1 12.8 125.4 14.7 Q123.5 16.4 120.8 15.7 L113.9 23 Z" fill="#ffffff" stroke="#ffffff" stroke-width="1.6" stroke-linejoin="round"/>
</svg>
<!-- status icon -->
<svg style="left:27px;top:777px" width="21" height="21" viewBox="0 0 21 21">
 <defs><radialGradient id="sti" cx="0.4" cy="0.3" r="0.8"><stop offset="0" stop-color="#5a86e6"/><stop offset="0.6" stop-color="#2a50c4"/><stop offset="1" stop-color="#1a3aa4"/></radialGradient></defs>
 <circle cx="10.3" cy="10.3" r="9.4" fill="url(#sti)" stroke="#a8b4d8" stroke-width="1.4"/>
 <circle cx="10.3" cy="5.4" r="1.7" fill="#ffffff"/>
 <rect x="8.8" y="8.2" width="3" height="8.4" rx=".6" fill="#ffffff"/>
</svg>

</body></html>
